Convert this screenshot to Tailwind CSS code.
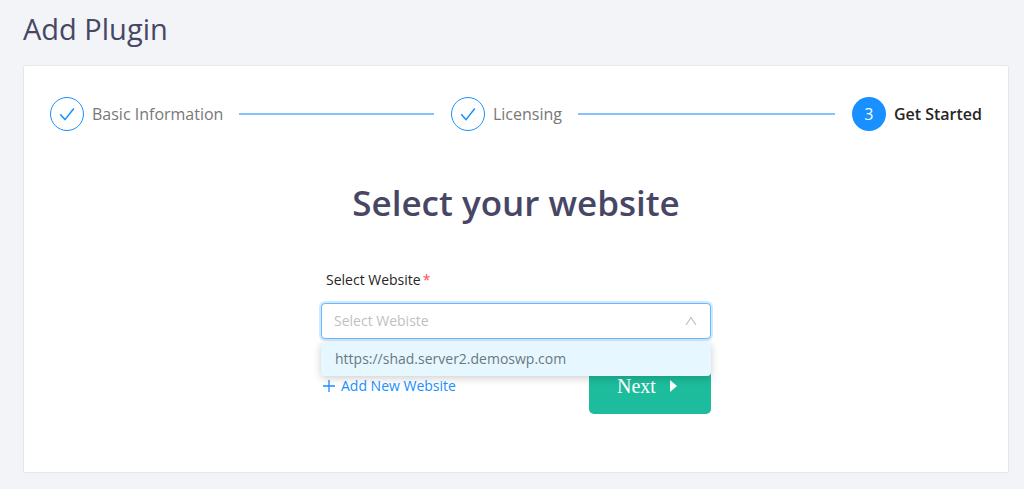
<!DOCTYPE html>
<html lang="en">
<head>
  <meta charset="UTF-8"/>
  <meta name="viewport" content="width=device-width, initial-scale=1.0"/>
  <title>Add Plugin</title>
  <script src="https://cdn.jsdelivr.net/npm/@tailwindcss/browser@4"></script>
</head>
<body class="bg-[#f2f4f8] min-h-screen pl-[23px] pr-[15px] pt-[7px] pb-4 font-['Open_Sans',sans-serif]">
  <h1 class="text-[29px] leading-[44px] text-[#474765] mb-[14px]">Add Plugin</h1>

  <main class="bg-white border border-[#e6e7ea] rounded-xs px-[26px] pt-[31px] pb-[58px]">
    <!-- Steps -->
    <ol class="flex items-center gap-[17px] text-base leading-[34px]">
      <li class="flex flex-1 items-center">
        <span class="flex size-[34px] shrink-0 items-center justify-center rounded-full border border-[#1890ff] text-[#1890ff]">
          <svg class="size-4" viewBox="0 0 16 16" fill="none" stroke="currentColor" stroke-width="1.5"><path d="M1.2 8.2 6 13.6 14.8 2.5"/></svg>
        </span>
        <span class="ml-2 whitespace-nowrap text-[#787878]">Basic Information</span>
        <span class="ml-4 h-0.5 flex-1 bg-[#84c3ff]"></span>
      </li>
      <li class="flex flex-1 items-center">
        <span class="flex size-[34px] shrink-0 items-center justify-center rounded-full border border-[#1890ff] text-[#1890ff]">
          <svg class="size-4" viewBox="0 0 16 16" fill="none" stroke="currentColor" stroke-width="1.5"><path d="M1.2 8.2 6 13.6 14.8 2.5"/></svg>
        </span>
        <span class="ml-2 whitespace-nowrap text-[#787878]">Licensing</span>
        <span class="ml-4 h-0.5 flex-1 bg-[#84c3ff]"></span>
      </li>
      <li class="flex items-center" aria-current="step">
        <span class="flex size-[34px] shrink-0 items-center justify-center rounded-full bg-[#1890ff] text-base text-white">3</span>
        <span class="ml-2 whitespace-nowrap font-semibold text-[#262626]">Get Started</span>
      </li>
    </ol>

    <h2 class="mt-12 text-center text-[35px] leading-12 font-semibold text-[#474765]">Select your website</h2>

    <form class="mx-auto mt-[41px] max-w-[390px]">
      <label for="website" class="block px-[5px] text-sm leading-6 text-[#262626]">Select Website<span class="ml-0.5 text-[#ff4d4f]">*</span></label>
      <div class="relative mt-[11px]">
        <select id="website" class="block h-9 w-full appearance-none rounded-sm border border-[#69b8ff] bg-white px-3 text-sm text-[#bfbfbf] shadow-[0_0_0_2px_rgba(24,144,255,0.2)] outline-none">
          <option value="">Select Webiste</option>
          <option>https://shad.server2.demoswp.com</option>
        </select>
        <svg class="pointer-events-none absolute top-3 right-[14px] size-3" viewBox="0 0 12 12" fill="none" stroke="#bfbfbf" stroke-width="1.2"><path d="M1 10 6 2.5 11 10"/></svg>
        <ul class="absolute inset-x-0 top-full mt-[3px] rounded-sm bg-[#e6f7ff] shadow-[0_2px_8px_rgba(0,0,0,0.2)]">
          <li class="px-[14px] text-sm leading-[34px] text-[#6b7880]">https://shad.server2.demoswp.com</li>
        </ul>
      </div>
      <div class="mt-[19px] flex items-center justify-between">
        <button type="button" class="flex items-center gap-[5px] px-px text-sm text-[#1890ff]">
          <svg class="size-[14px]" viewBox="0 0 14 14" fill="none" stroke="currentColor" stroke-width="1.3"><path d="M7 1v12M1 7h12"/></svg>
          Add New Website
        </button>
        <button type="submit" class="flex h-14 w-[122px] items-center justify-start gap-[14px] rounded-[5px] bg-[#1dbc9c] px-7 font-['Liberation_Serif',serif] text-xl text-white">
          Next
          <svg class="h-3 w-[7px]" viewBox="0 0 7 12" fill="currentColor"><path d="M0 0 7 6 0 12z"/></svg>
        </button>
      </div>
    </form>
  </main>
</body>
</html>
